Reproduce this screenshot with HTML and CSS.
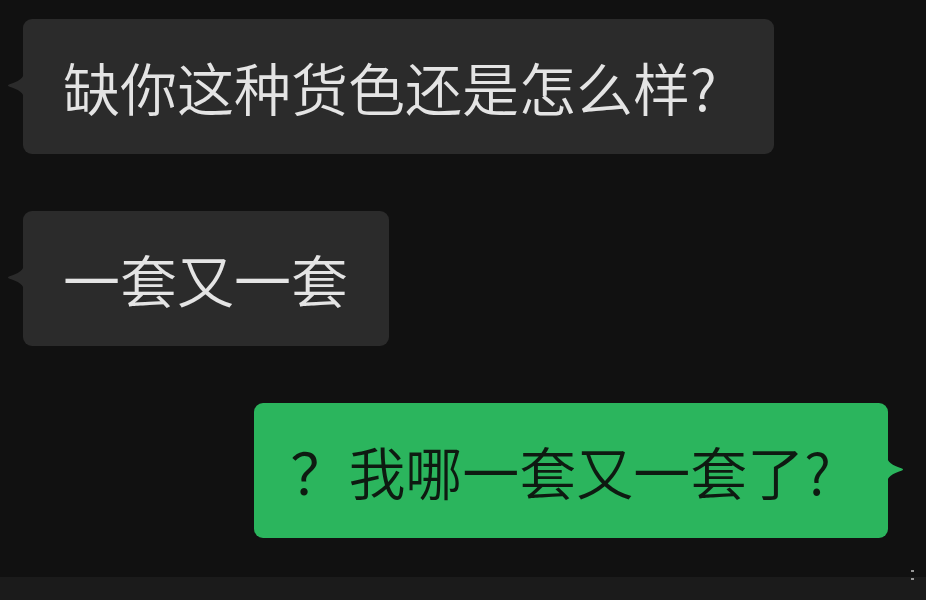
FILE: index.html
```html
<!DOCTYPE html>
<html lang="zh-CN">
<head>
    <meta charset="UTF-8">
    <meta name="viewport" content="width=device-width, initial-scale=1.0">
    <title>聊天记录</title>
    <link rel="stylesheet" href="styles.css">
</head>
<body>
    <main class="chat">
        <div class="row row-in">
            <div class="bubble bubble-in bubble-q">缺你这种货色还是怎么样?</div>
        </div>
        <div class="row row-in">
            <div class="bubble bubble-in">一套又一套</div>
        </div>
        <div class="row row-out">
            <div class="bubble bubble-out bubble-q"><span class="lead-mark">？</span>我哪一套又一套了?</div>
        </div>
    </main>
    <footer class="bottom-bar">
        <span class="mark"></span>
    </footer>
</body>
</html>
```

FILE: styles.css
```css
body {
    margin: 0;
    padding: 0;
    background-color: #111111;
    font-family: "Noto Sans CJK SC", "Noto Sans", sans-serif;
    overflow: hidden;
}
.chat {
    display: flex;
    flex-direction: column;
    gap: 57px;
    padding: 19px 0 0 0;
    height: 557px;
    box-sizing: border-box;
}
.row {
    display: flex;
}
.row-in {
    justify-content: flex-start;
    padding-left: 23px;
}
.row-out {
    justify-content: flex-end;
    padding-right: 38px;
}
.bubble {
    position: relative;
    font-size: 57px;
    font-weight: 350;
    line-height: 67px;
    padding: 34px 41px 34px 40px;
    border-radius: 9px;
    white-space: nowrap;
}
.bubble-q {
    padding-right: 57px;
}
.bubble::before {
    content: "";
    position: absolute;
    top: calc(50% - 14px);
    width: 18px;
    height: 26px;
    background-color: inherit;
}
.bubble-in {
    background-color: #2b2b2b;
    color: #e4e4e4;
}
.bubble-in::before {
    left: -17px;
    clip-path: path('M18 0 C18 5 13 9 3 12 Q1 13 3 14 C13 17 18 21 18 26 Z');
}
.bubble-out {
    background-color: #2bb55d;
    color: #0e1a11;
}
.bubble-out::before {
    right: -17px;
    clip-path: path('M0 0 C0 5 5 9 15 12 Q17 13 15 14 C5 17 0 21 0 26 Z');
}
.lead-mark {
    display: inline-block;
    margin-left: -4px;
    margin-right: 1px;
    font-weight: 400;
}
.bottom-bar {
    height: 24px;
    background-color: #1b1b1b;
    display: flex;
    justify-content: flex-end;
    padding-right: 12px;
    margin-top: 20px;
}
.mark {
    width: 3px;
    height: 10px;
    margin-top: -7px;
    border-top: 2px solid #cfcfcf;
    border-bottom: 2px solid #cfcfcf;
    box-sizing: border-box;
    opacity: 0.7;
}
```
